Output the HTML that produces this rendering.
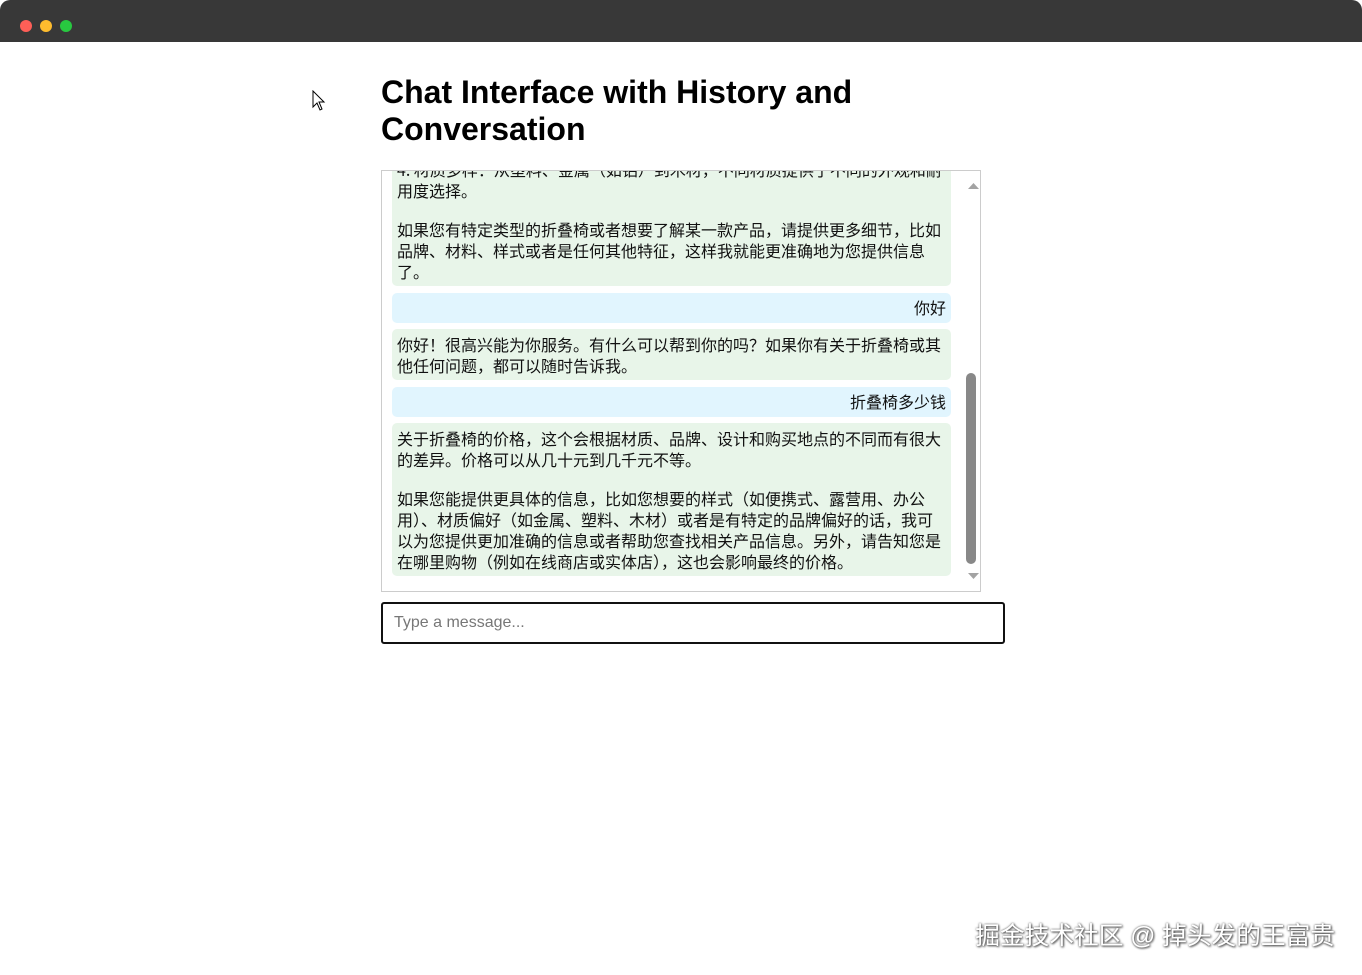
<!DOCTYPE html>
<html><head><meta charset="utf-8"><style>
*{margin:0;padding:0;box-sizing:border-box}
body{width:1362px;height:975px;background:#fff;position:relative;overflow:hidden;font-family:"Liberation Sans","Noto Sans CJK SC",sans-serif}
.bar{position:absolute;left:0;top:0;width:1362px;height:42px;background:#383838;border-radius:10px 10px 0 0}
.dot{position:absolute;top:20px;width:12px;height:12px;border-radius:50%}
h1{position:absolute;left:381px;top:74px;font-size:32px;line-height:37px;font-weight:bold;color:#000;width:600px}
.box{position:absolute;left:381px;top:170px;width:600px;height:422px;border:1px solid #ccc;overflow:hidden}
.inner{position:absolute;left:10px;top:-17px;width:559px}
.m{padding:4.5px 5px;border-radius:5px;margin-bottom:6.5px;font-size:16px;line-height:21px;color:#111;background:#e8f5e9;font-family:"Noto Sans CJK SC","Liberation Sans",sans-serif}
.u{background:#e1f5fe;text-align:right}
.gap{height:18px}
.sb{position:absolute;left:583px;top:0;width:17px;height:420px;background:#fff}
.thumb{position:absolute;left:584px;top:202px;width:10px;height:191px;background:#888;border-radius:5px}
input{position:absolute;left:381px;top:602px;width:624px;height:42px;border:2px solid #111;border-radius:3px;padding-left:11px;font-size:16px;font-family:"Liberation Sans",sans-serif;outline:none}
input::placeholder{color:#777}
.wm{position:absolute;right:27px;top:916px;font-size:24.7px;color:#fff;text-shadow:0 0 2px #555,1px 1px 2px #444}
</style></head><body>
<div class="bar"><div class="dot" style="left:20px;background:#fe5f57"></div><div class="dot" style="left:40px;background:#febc2e"></div><div class="dot" style="left:60px;background:#28c840"></div></div>
<svg style="position:absolute;left:312px;top:90px" width="14" height="22" viewBox="0 0 14 22"><path d="M1 1 L1 17 L5 13 L8 20 L10 19 L7 12 L12 12 Z" fill="#fff" stroke="#000" stroke-width="1"/></svg>
<h1>Chat Interface with History and Conversation</h1>
<div class="box">
<div class="inner">
<div class="m">4. 材质多样：从塑料、金属（如铝）到木材，不同材质提供了不同的外观和耐用度选择。<div class="gap"></div>如果您有特定类型的折叠椅或者想要了解某一款产品，请提供更多细节，比如品牌、材料、样式或者是任何其他特征，这样我就能更准确地为您提供信息了。</div>
<div class="m u">你好</div>
<div class="m">你好！很高兴能为你服务。有什么可以帮到你的吗？如果你有关于折叠椅或其他任何问题，都可以随时告诉我。</div>
<div class="m u">折叠椅多少钱</div>
<div class="m">关于折叠椅的价格，这个会根据材质、品牌、设计和购买地点的不同而有很大的差异。价格可以从几十元到几千元不等。<div class="gap"></div>如果您能提供更具体的信息，比如您想要的样式（如便携式、露营用、办公用）、材质偏好（如金属、塑料、木材）或者是有特定的品牌偏好的话，我可以为您提供更加准确的信息或者帮助您查找相关产品信息。另外，请告知您是在哪里购物（例如在线商店或实体店），这也会影响最终的价格。</div>
</div>
<div class="sb"></div>
<svg style="position:absolute;left:583px;top:10px" width="17" height="10"><path d="M3 8 L8.5 2 L14 8 Z" fill="#a3a3a3"/></svg>
<svg style="position:absolute;left:583px;top:400px" width="17" height="10"><path d="M3 2 L8.5 8 L14 2 Z" fill="#a3a3a3"/></svg>
<div class="thumb"></div>
</div>
<input placeholder="Type a message...">
<div class="wm">掘金技术社区 @ 掉头发的王富贵</div>
</body></html>
